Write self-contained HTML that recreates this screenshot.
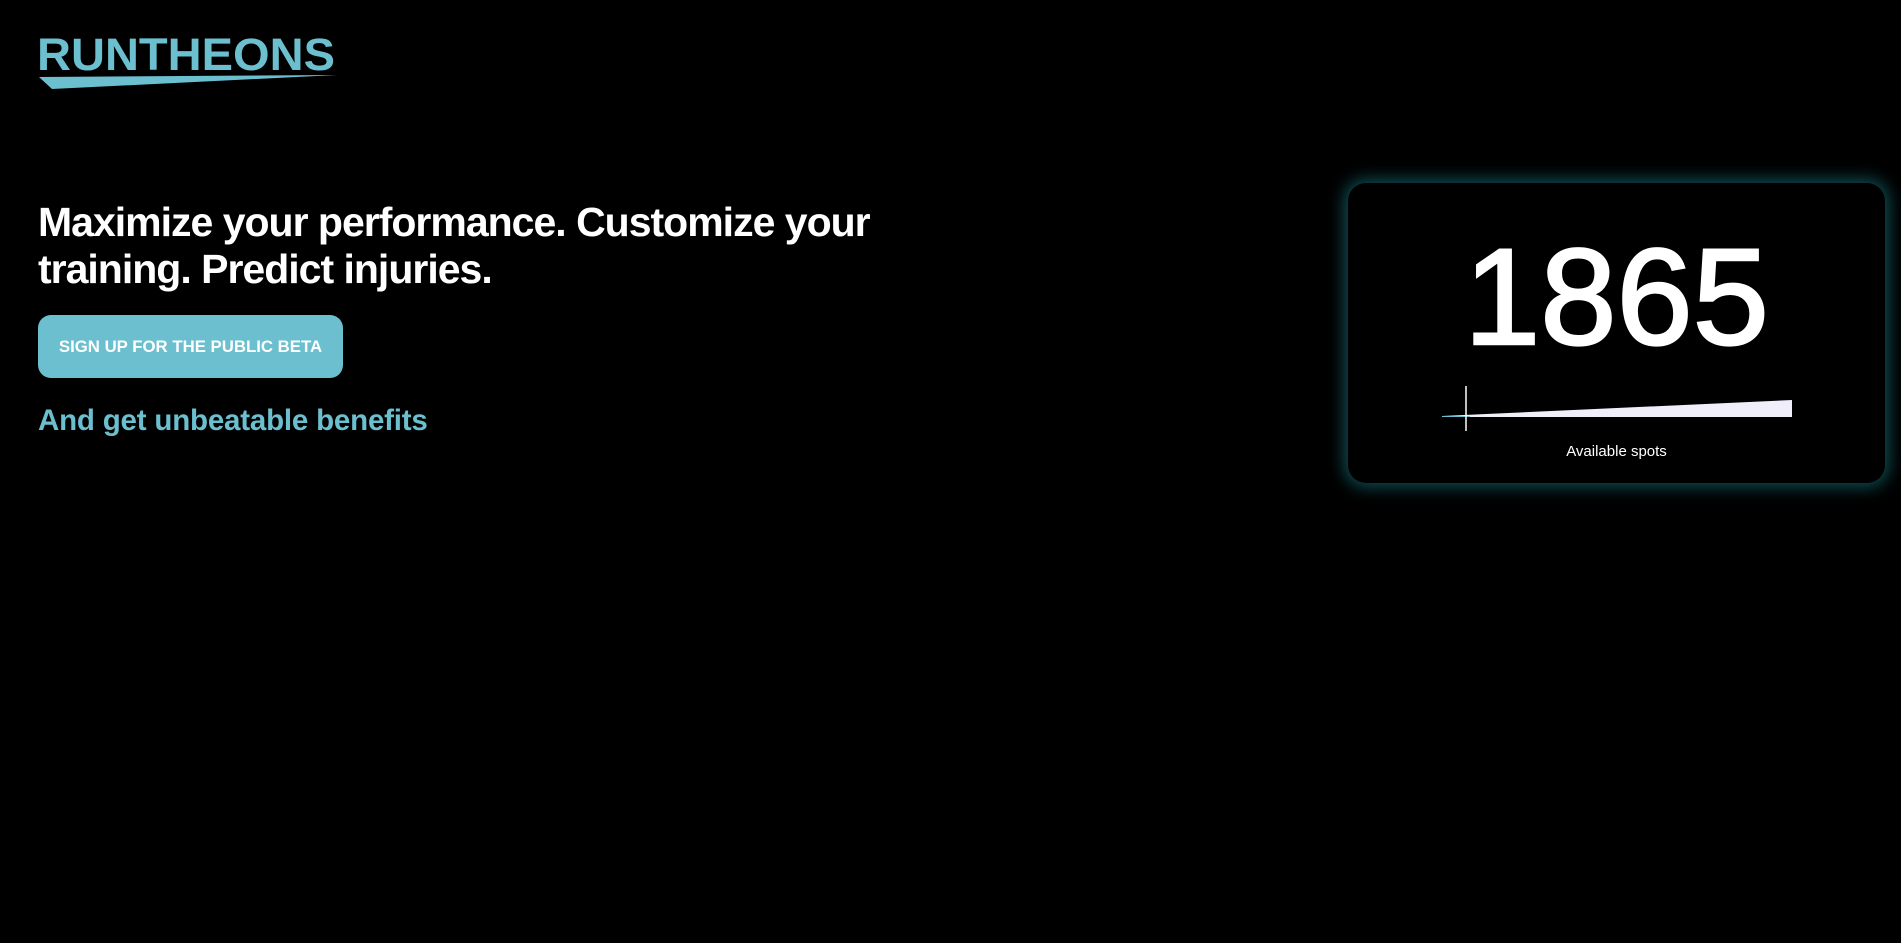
<!DOCTYPE html>
<html><head><meta charset="utf-8"><style>
html,body{margin:0;padding:0;background:#000;width:1901px;height:943px;overflow:hidden;font-family:"Liberation Sans",sans-serif;}
.logo{position:absolute;left:0;top:0;}
h1{position:absolute;left:38px;top:199px;margin:0;width:900px;color:#fff;font-size:41px;font-weight:bold;line-height:47px;letter-spacing:-1px;}
.btn{position:absolute;left:38px;top:315px;width:305px;height:63px;border-radius:13px;background:#6bbfcf;color:#fff;font-weight:bold;font-size:16.8px;line-height:63px;text-align:center;}
.sub{position:absolute;left:38px;top:404px;color:#6bbfcf;font-size:29.5px;font-weight:bold;letter-spacing:-0.2px;}
.card{position:absolute;left:1348px;top:183px;width:537px;height:300px;border-radius:18px;background:#000;box-shadow:0 0 16px 4px rgba(30,140,150,0.55);}
.num{position:absolute;left:0;width:537px;text-align:center;color:#fff;font-size:137px;font-weight:normal;line-height:180px;letter-spacing:0px;-webkit-text-stroke:2.5px #fff;}
.av{position:absolute;left:1348px;width:537px;top:443px;text-align:center;color:#fff;font-size:15px;}
</style></head><body>
<svg class="logo" width="360" height="100">
<text x="37" y="70" font-family="Liberation Sans" font-weight="bold" font-size="45" fill="#6bbfcf" textLength="298" lengthAdjust="spacingAndGlyphs">RUNTHEONS</text>
<polygon points="39,77 337,75 52,89" fill="#6bbfcf"/>
</svg>
<h1>Maximize your performance. Customize your training. Predict injuries.</h1>
<div class="btn">SIGN UP FOR THE PUBLIC BETA</div>
<div class="sub">And get unbeatable benefits</div>
<div class="card"><div class="num" style="top:25px">1865</div></div>
<svg style="position:absolute;left:0;top:0" width="1901" height="943">
<polygon points="1442,416 1792,400 1792,417 1442,417" fill="#f1eefc"/>
<line x1="1442" y1="416.5" x2="1470" y2="416.5" stroke="#6bbfcf" stroke-width="1"/>
<line x1="1466" y1="386" x2="1466" y2="431" stroke="#fff" stroke-width="1.5"/>
</svg>
<div class="av">Available spots</div>
</body></html>
